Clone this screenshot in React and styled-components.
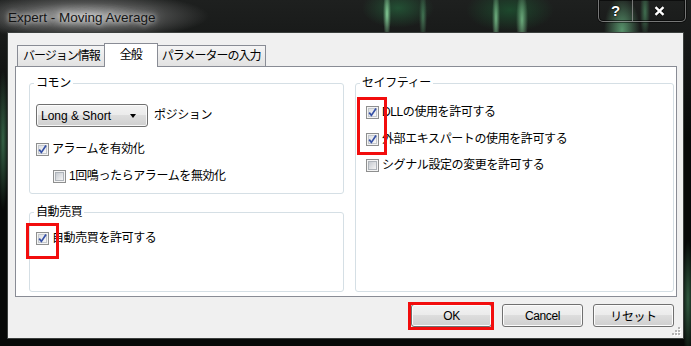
import styled, { createGlobalStyle } from "styled-components"

const GlobalStyle = createGlobalStyle`
  *, *::before, *::after { box-sizing: border-box; }
  html, body { margin: 0; padding: 0; background: #060807; }
  body {
    font-family: "Liberation Sans", "Noto Sans CJK JP", sans-serif;
    font-size: 12px;
    color: #000;
  }
`

const Window = styled.div`
  position: relative;
  width: 691px;
  height: 346px;
  display: flex;
  flex-direction: column;
  padding: 0 7px 7px;
  overflow: hidden;
  background:
    radial-gradient(125px 24px at 84px 16px, rgba(205,205,205,0.85), rgba(130,130,130,0.5) 55%, transparent),
    radial-gradient(4px 26px at 387px 14px, rgba(150,230,170,0.85), transparent),
    radial-gradient(36px 20px at 398px 8px, rgba(40,120,70,0.55), transparent),
    radial-gradient(4px 26px at 423px 16px, rgba(110,200,140,0.5), transparent),
    radial-gradient(4px 30px at 496px 18px, rgba(140,220,160,0.75), transparent),
    radial-gradient(6px 30px at 522px 20px, rgba(140,220,160,0.7), transparent),
    radial-gradient(44px 22px at 510px 10px, rgba(30,100,55,0.6), transparent),
    radial-gradient(18px 34px at 622px 30px, rgba(120,210,150,0.65), transparent),
    radial-gradient(5px 26px at 645px 12px, rgba(100,190,130,0.5), transparent),
    radial-gradient(6px 70px at 3px 140px, rgba(90,170,120,0.55), transparent),
    radial-gradient(6px 60px at 688px 300px, rgba(90,170,120,0.5), transparent),
    linear-gradient(#1e201f, #070908 40%);
`

const TitleBar = styled.div`
  height: 32px;
  flex: none;
  display: flex;
  justify-content: space-between;
  align-items: flex-start;
  margin: 0 -2px 0 1px;
`

const Title = styled.div`
  margin-top: 10px;
  font-size: 13.5px;
  line-height: 16px;
  color: #141414;
  text-shadow: 0 0 5px rgba(240,240,240,0.95), 0 0 12px rgba(215,215,215,0.8);
`

const CaptionGroup = styled.div`
  display: flex;
  height: 22px;
  border: 1px solid rgba(150,150,150,0.75);
  border-top: none;
  border-radius: 0 0 5px 5px;
  box-shadow: inset 0 0 0 1px rgba(0,0,0,0.55), 0 0 0 1px rgba(0,0,0,0.45);
  overflow: hidden;
`

const CaptionButton = styled.div`
  width: ${p => p.$w}px;
  display: flex;
  align-items: center;
  justify-content: center;
  color: #fff;
  font: bold 15px "Liberation Sans", sans-serif;
  text-shadow: 0 0 2px #000, 0 0 1px #000;
  & + & { border-left: 1px solid rgba(150,150,150,0.75); }
`

const Client = styled.div`
  position: relative;
  flex: 1;
  display: flex;
  flex-direction: column;
  background: #f0f0f0;
  border: 1px solid #3c403e;
  padding: 10px 6px 0 7px;
`

const TabStrip = styled.div`
  display: flex;
  align-items: flex-end;
  height: 23px;
  padding-left: 2px;
`

const Tab = styled.div`
  position: relative;
  height: ${p => (p.$active ? 24 : 21)}px;
  margin: 0 ${p => (p.$active ? -2 : 0)}px ${p => (p.$active ? -1 : 0)}px;
  padding: 0 ${p => (p.$active ? 15 : 5)}px;
  z-index: ${p => (p.$active ? 1 : 0)};
  display: flex;
  align-items: center;
  border: 1px solid #898c95;
  border-bottom: none;
  background: ${p => (p.$active ? "#fff" : "linear-gradient(#f5f5f5, #e9e9e9 60%, #e2e2e2)")};
  font-size: 12px;
  letter-spacing: -1px;
  line-height: 15px;
  white-space: nowrap;
`

const Page = styled.div`
  height: 231px;
  flex: none;
  display: grid;
  grid-template-columns: 315px 319px;
  column-gap: 11px;
  padding: 8px 2px 4px 13px;
  border: 1px solid #898c95;
  background: #fff;
`

const Column = styled.div`
  display: flex;
  flex-direction: column;
  gap: 10px;
`

const Group = styled.fieldset`
  margin: 0;
  min-width: 0;
  padding: 0 6px;
  border: 1px solid #d5dfe5;
  border-radius: 3px;
  height: ${p => (p.$height ? `${p.$height}px` : "auto")};
  flex: ${p => (p.$grow ? 1 : "none")};
`

const Legend = styled.legend`
  padding: 0 2px;
  margin-left: -2px;
  font-size: 12px;
  line-height: 16px;
  letter-spacing: -0.4px;
`

const Body = styled.div`
  display: flex;
  flex-direction: column;
  align-items: flex-start;
  padding-top: ${p => p.$top}px;
  padding-left: ${p => p.$left || 0}px;
`

const ComboRow = styled.div`
  display: flex;
  align-items: center;
  gap: 6px;
`

const Combo = styled.div`
  width: 112px;
  height: 23px;
  display: flex;
  align-items: center;
  justify-content: space-between;
  padding: 0 11px 0 4px;
  border: 1px solid #707070;
  border-radius: 3px;
  background: linear-gradient(#f2f2f2 0%, #ebebeb 50%, #dddddd 50%, #cfcfcf 100%);
  box-shadow: inset 0 0 0 1px rgba(255,255,255,0.8);
  font-size: 12px;
  white-space: nowrap;
`

const ComboArrow = styled.span`
  width: 0;
  height: 0;
  border-left: 3.5px solid transparent;
  border-right: 3.5px solid transparent;
  border-top: 4px solid #000;
`

const CheckRow = styled.div`
  display: flex;
  align-items: center;
  gap: 3px;
  height: 15px;
  margin-top: ${p => p.$top || 0}px;
  margin-left: ${p => p.$indent || 0}px;
`

const Box = styled.span`
  position: relative;
  flex: none;
  width: 13px;
  height: 13px;
  border: 1px solid #8e8f8f;
  background: #f4f4f4;
  &::before {
    content: "";
    position: absolute;
    inset: 1px;
    border: 1px solid ${p => (p.$checked ? "#c4c8cd" : "#aeb3b9")};
    background: ${p => (p.$checked
      ? "linear-gradient(135deg, #dfe1e4, #f8f8f8)"
      : "linear-gradient(135deg, #c6cad0, #f4f4f4)")};
  }
  svg { position: absolute; left: 0; top: 0; }
`

const Label = styled.span`
  font-size: 12px;
  line-height: 15px;
  letter-spacing: -0.4px;
  white-space: nowrap;
`

const ButtonRow = styled.div`
  display: flex;
  justify-content: flex-end;
  gap: 10px;
  margin-top: 7px;
  padding-right: 3px;
`

const Button = styled.button`
  width: 81px;
  height: 23px;
  padding: 0;
  display: flex;
  align-items: center;
  justify-content: center;
  border: 1px solid #707070;
  border-radius: 3px;
  background: linear-gradient(#f2f2f2 0%, #ebebeb 50%, #dddddd 50%, #cfcfcf 100%);
  box-shadow: inset 0 0 0 1px #fcfcfc;
  font-family: inherit;
  font-size: 12px;
  letter-spacing: -0.4px;
  color: #000;
`

const Gripper = styled.svg`
  position: absolute;
  right: 2px;
  bottom: 2px;
`

const Marker = styled.div`
  position: absolute;
  left: ${p => p.$x}px;
  top: ${p => p.$y}px;
  width: ${p => p.$w}px;
  height: ${p => p.$h}px;
  border: 3px solid #f20d0d;
  z-index: 5;
`

const CheckBox = ({ checked }) => (
  <Box $checked={checked}>
    {checked && (
      <svg width="11" height="11" viewBox="0 0 11 11">
        <path d="M2.2 5.6 L4.4 8.4 L9 1.6" fill="none" stroke="#3550a6" strokeWidth="1.7" />
      </svg>
    )}
  </Box>
)

const Check = ({ checked, children, top, indent }) => (
  <CheckRow $top={top} $indent={indent}>
    <CheckBox checked={checked} />
    <Label>{children}</Label>
  </CheckRow>
)

const gripDots = [[8, 2], [5, 5], [8, 5], [2, 8], [5, 8], [8, 8]]

const App = () => {
  return (
    <Window>
      <GlobalStyle />
      <TitleBar>
        <Title>Expert - Moving Average</Title>
        <CaptionGroup>
          <CaptionButton $w={33}>?</CaptionButton>
          <CaptionButton $w={53}>
            <svg width="11" height="10" viewBox="0 0 11 10">
              <path d="M1.5 1.2 L9.5 8.8 M9.5 1.2 L1.5 8.8" stroke="#000" strokeWidth="4" strokeOpacity="0.6" />
              <path d="M1.5 1.2 L9.5 8.8 M9.5 1.2 L1.5 8.8" stroke="#fff" strokeWidth="2.4" />
            </svg>
          </CaptionButton>
        </CaptionGroup>
      </TitleBar>

      <Client>
        <TabStrip>
          <Tab>バージョン情報</Tab>
          <Tab $active>全般</Tab>
          <Tab>パラメーターの入力</Tab>
        </TabStrip>

        <Page>
          <Column>
            <Group $height={119}>
              <Legend>コモン</Legend>
              <Body $top={13}>
                <ComboRow>
                  <Combo>
                    <span>Long &amp; Short</span>
                    <ComboArrow />
                  </Combo>
                  <Label>ポジション</Label>
                </ComboRow>
                <Check checked top={15}>アラームを有効化</Check>
                <Check top={12} indent={17}>1回鳴ったらアラームを無効化</Check>
              </Body>
            </Group>
            <Group $grow>
              <Legend>自動売買</Legend>
              <Body $top={11}>
                <Check checked>自動売買を許可する</Check>
              </Body>
            </Group>
          </Column>

          <Group>
            <Legend>セイフティー</Legend>
            <Body $top={14} $left={4}>
              <Check checked>DLLの使用を許可する</Check>
              <Check checked top={12}>外部エキスパートの使用を許可する</Check>
              <Check top={11}>シグナル設定の変更を許可する</Check>
            </Body>
          </Group>
        </Page>

        <ButtonRow>
          <Button>OK</Button>
          <Button>Cancel</Button>
          <Button>リセット</Button>
        </ButtonRow>

        <Gripper width="10" height="10" viewBox="0 0 10 10">
          {gripDots.map(([x, y]) => (
            <g key={`${x}-${y}`}>
              <rect x={x} y={y} width="2" height="2" fill="#fff" />
              <rect x={x - 1} y={y - 1} width="2" height="2" fill="#b4b4b4" />
            </g>
          ))}
        </Gripper>
      </Client>

      <Marker $x={357} $y={97} $w={30} $h={58} />
      <Marker $x={26} $y={223} $w={33} $h={36} />
      <Marker $x={408} $y={302} $w={86} $h={28} />
    </Window>
  )
}

export default App
